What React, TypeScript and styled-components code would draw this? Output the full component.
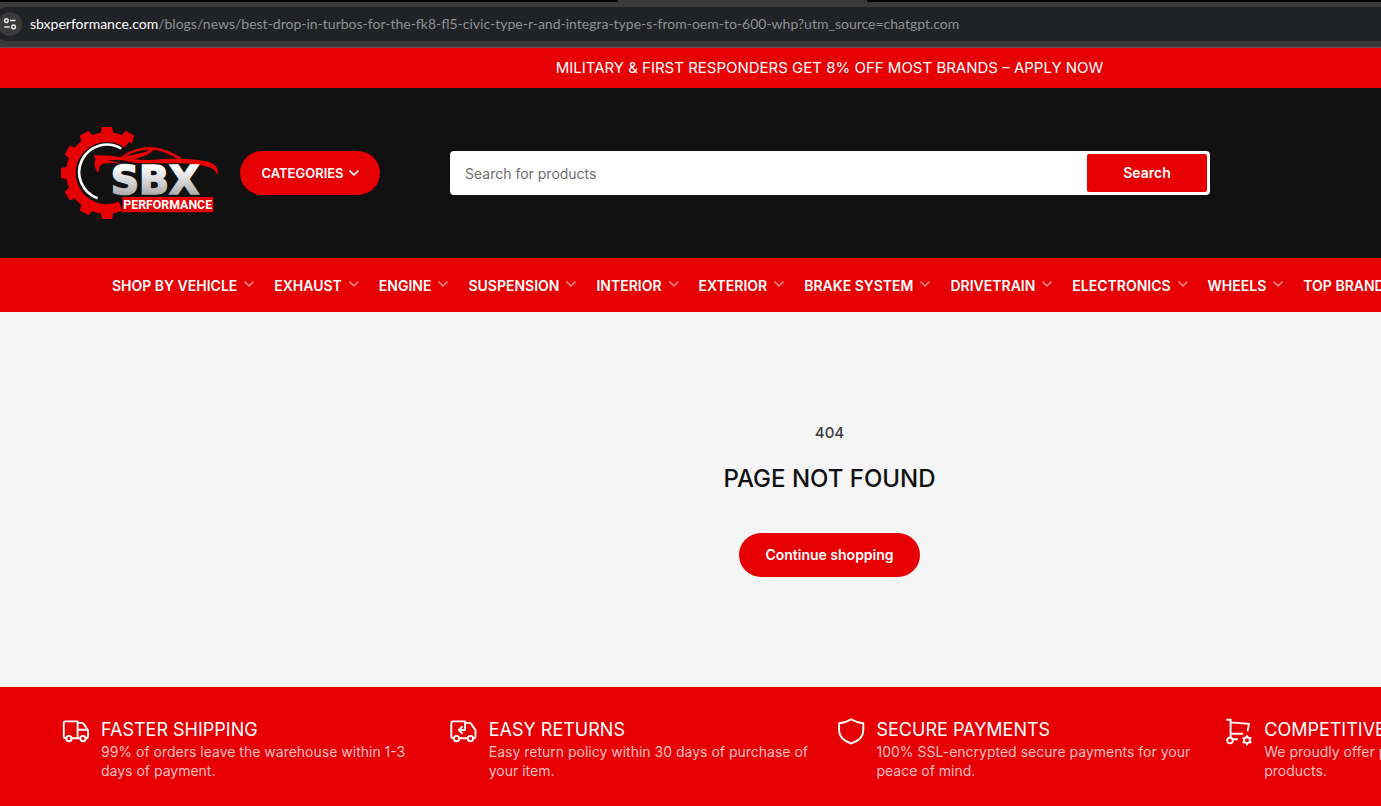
import React from "react";
import styled, { createGlobalStyle } from "styled-components";

const RED = "#e60004";

const GlobalStyle = createGlobalStyle`
  *, *::before, *::after { box-sizing: border-box; }
  body {
    margin: 0;
    background: #f5f5f5;
    font-family: "Inter", "Liberation Sans", sans-serif;
    -webkit-font-smoothing: antialiased;
  }
  h1, h2, p, ul { margin: 0; padding: 0; }
  button, input { font-family: inherit; }
`;

const Window = styled.div`
  min-height: 100vh;
  overflow: hidden;
  display: flex;
  flex-direction: column;
`;

const TabStrip = styled.div`
  height: 2px;
  padding-left: 618px;
  background: #000;
`;

const ActiveTab = styled.div`
  width: 249px;
  height: 2px;
  background: #3a3a3b;
`;

const BrowserBar = styled.div`
  height: 46px;
  padding: 5px 0 6px;
  background: #3a3a3b;
  border-bottom: 1px solid #6b5050;
`;

const AddressBox = styled.div`
  display: flex;
  align-items: center;
  gap: 8px;
  height: 34px;
  margin-left: -8px;
  padding-left: 6px;
  border-radius: 17px 0 0 17px;
  background: #202225;
`;

const SiteInfo = styled.button`
  display: grid;
  place-items: center;
  flex: none;
  width: 24px;
  height: 24px;
  padding: 0;
  border: 0;
  border-radius: 50%;
  background: #3a3a3b;
`;

const Url = styled.p`
  font-family: Lato, "Open Sans", sans-serif;
  font-size: 14px;
  line-height: 20px;
  white-space: nowrap;
  color: #8f9194;
`;

const Host = styled.span`
  color: #fff;
`;

/* The shop page is wider than the visible window and runs off its right edge. */
const Shop = styled.div`
  display: flex;
  flex-direction: column;
  flex: 1;
  width: calc(100% + 278px);
`;

const Announcement = styled.a`
  display: block;
  background: ${RED};
  color: #fff;
  font-size: 15px;
  line-height: 40px;
  text-align: center;
  text-decoration: none;
`;

const Header = styled.header`
  display: flex;
  align-items: center;
  height: 170px;
  padding: 0 60px;
  background: #111;
`;

const LogoLink = styled.a`
  display: block;
  width: 160px;
  height: 95px;
  margin-right: 20px;
  svg { display: block; }
`;

const Pill = styled.button<{ $width: number; $size: number }>`
  display: inline-flex;
  align-items: center;
  justify-content: center;
  gap: 5px;
  flex: none;
  width: ${(p) => p.$width}px;
  height: 44px;
  padding: 0 0 1px;
  border: 0;
  border-radius: 22px;
  background: ${RED};
  color: #fff;
  font-size: ${(p) => p.$size}px;
  font-weight: 600;
`;

const SearchForm = styled.form`
  display: flex;
  flex: 1;
  max-width: 760px;
  height: 44px;
  margin-left: 70px;
  padding: 3px;
  border-radius: 4px;
  background: #fff;
`;

const SearchInput = styled.input`
  flex: 1;
  min-width: 0;
  padding: 0 12px;
  border: 0;
  outline: 0;
  background: transparent;
  font-size: 14px;
  color: #111;
  &::placeholder { color: #6e6e6e; opacity: 1; }
`;

const SearchButton = styled.button`
  width: 120px;
  padding: 0 0 2px;
  border: 0;
  border-radius: 2px;
  background: ${RED};
  color: #fff;
  font-size: 14px;
  font-weight: 600;
`;

const Nav = styled.nav`
  height: 54px;
  padding: 2px 0 0 112px;
  background: ${RED};
`;

const NavList = styled.ul`
  display: flex;
  align-items: center;
  gap: 20px;
  height: 100%;
  list-style: none;
`;

const NavLink = styled.a`
  display: flex;
  align-items: center;
  gap: 7px;
  color: #fff;
  font-size: 14px;
  font-weight: 600;
  line-height: 20px;
  white-space: nowrap;
  text-decoration: none;
  svg { opacity: 0.5; margin-bottom: 4px; }
`;

const Main = styled.main`
  display: flex;
  flex-direction: column;
  align-items: center;
  flex: 1;
  padding: 110px 0;
  background: #f5f5f5;
  text-align: center;
`;

const ErrorCode = styled.p`
  margin-bottom: 20px;
  font-size: 15px;
  font-weight: 500;
  line-height: 22px;
  color: #3d3d3d;
`;

const Title = styled.h1`
  margin-bottom: 39px;
  font-size: 24px;
  font-weight: 500;
  line-height: 30px;
  color: #111;
`;

const Footer = styled.footer`
  display: grid;
  grid-template-columns: repeat(4, 1fr);
  column-gap: 12px;
  padding: 31px 60px 26px;
  background: ${RED};
`;

const Feature = styled.section`
  display: flex;
  gap: 11px;
  padding-right: 12px;
  color: #fff;
  svg { flex: none; }
`;

const FeatureTitle = styled.h2`
  margin-bottom: 1px;
  font-size: 18px;
  font-weight: 400;
  line-height: 23px;
`;

const FeatureText = styled.p`
  font-size: 14px;
  line-height: 19px;
  color: #fabfc0;
`;

const Chevron = () => (
  <svg width="10" height="10" viewBox="0 0 10 10" fill="none" stroke="#fff" strokeWidth="1.6" aria-hidden="true">
    <path d="M0.5 2.6 5 6.9 9.5 2.6" />
  </svg>
);

const TuneIcon = () => (
  <svg width="14" height="14" viewBox="0 0 14 14" fill="none" stroke="#e6e6e6" strokeWidth="1.5" aria-hidden="true">
    <circle cx="3.4" cy="3.6" r="1.8" />
    <path d="M7 3.6h5.5M1.2 9.9h5.5" />
    <circle cx="10.6" cy="9.9" r="1.8" />
  </svg>
);

const teeth = [30, 0, -30, -60, -90, -120, -150, -180];

const Logo = () => (
  <svg width="160" height="95" viewBox="30 33 480 285" role="img" aria-label="SBX Performance">
    <defs>
      <linearGradient id="steel" x1="0" y1="0" x2="0" y2="1">
        <stop offset="0.2" stopColor="#fff" />
        <stop offset="0.55" stopColor="#d2d2d2" />
        <stop offset="0.85" stopColor="#a6a6a6" />
      </linearGradient>
    </defs>
    <g fill={RED}>
      {teeth.map((a) => (
        <path key={a} d="M151 60 156 36h30l5 24z" transform={`rotate(${a} 171 174)`} />
      ))}
    </g>
    <path d="M233 86A108 108 0 1 0 212 274" fill="none" stroke={RED} strokeWidth="29" />
    <path
      fill="#111"
      d="M124 118C165 113 205 114 220 113 250 97 275 89 302 90 340 92 370 106 398 124 440 125 480 132 498 145L500 240H150V170z"
    />
    <path d="M214 101A83 83 0 1 0 143 250" fill="none" stroke="#fff" strokeWidth="8" />
    <g fill={RED}>
      <path d="M130 121C165 121 195 124 212 126 240 106 270 96 302 96 340 98 372 114 396 130L382 131C355 115 330 105 302 104 272 104 245 112 226 126 245 133 270 136 300 135 350 131 400 130 440 134 470 137 488 143 497 153 505 163 505 172 502 180 497 168 490 160 474 156 425 140 340 146 285 145 255 145 235 139 213 135L172 135C185 138 205 142 222 148 190 143 160 142 150 152L144 174C133 160 131 143 137 133z" />
      <path d="M226 126C254 114 276 118 298 104L310 105C294 124 268 126 250 134z" />
    </g>
    <text
      x="315"
      y="238"
      textAnchor="middle"
      fontFamily="DejaVu Sans, sans-serif"
      fontWeight="700"
      fontSize="118"
      fill="url(#steel)"
      stroke="url(#steel)"
      strokeWidth="5"
    >
      SBX
    </text>
    <path fill={RED} d="M217 246h273v46H217z" />
    <text
      x="353"
      y="283"
      textAnchor="middle"
      fontFamily="Roboto, sans-serif"
      fontWeight="700"
      fontSize="37"
      fill="#fff"
    >
      PERFORMANCE
    </text>
  </svg>
);

const iconProps = {
  width: 30,
  height: 30,
  viewBox: "0 0 30 30",
  fill: "none",
  stroke: "#fff",
  strokeWidth: 1.9,
  strokeLinejoin: "round" as const,
  strokeLinecap: "round" as const,
  "aria-hidden": true,
};

const TruckIcon = () => (
  <svg {...iconProps}>
    <path d="M6.2 20.2H5.3a1.5 1.5 0 0 1-1.5-1.5V4.9a1.5 1.5 0 0 1 1.5-1.5H17.6v16.8h-7M17.6 4.9h4.4a2 2 0 0 1 1.7 1L28 12.2v6.5a1.5 1.5 0 0 1-1.5 1.5h-1M17.6 11.8h10M17.6 20.2h2.6" />
    <circle cx="9" cy="20.6" r="2.7" />
    <circle cx="23" cy="20.6" r="2.7" />
  </svg>
);

const ReturnIcon = () => (
  <svg {...iconProps}>
    <path d="M5.7 20.2H4.8a1.5 1.5 0 0 1-1.5-1.5V4.9a1.5 1.5 0 0 1 1.5-1.5H17.1v7a1.6 1.6 0 0 1-1.6 1.6h-4M14.1 8.8 10.8 12l3.3 3.2M17.1 4.9h4.4a2 2 0 0 1 1.7 1L27.5 12.2v6.5a1.5 1.5 0 0 1-1.5 1.5h-1M11.2 20.2h8.6" />
    <circle cx="8.5" cy="20.6" r="2.7" />
    <circle cx="22.5" cy="20.6" r="2.7" />
  </svg>
);

const ShieldIcon = () => (
  <svg {...iconProps}>
    <path d="M15.2 1.2C11.7 3.5 7.7 4.8 3.1 5.2v7.4c0 6.3 4.6 10.4 12.1 12.9 7.5-2.5 12.1-6.6 12.1-12.9V5.2C22.7 4.8 18.7 3.5 15.2 1.2z" />
  </svg>
);

const CartGearIcon = () => (
  <svg {...iconProps} strokeLinecap="butt" strokeLinejoin="miter">
    <path d="M3.2 1.8h4.4v17.6M7.6 4.4 25.9 5.8 24.6 13.4M7.6 15.8h12.6M9.6 21.2h5.4" />
    <circle cx="7" cy="22.6" r="2.8" />
    <circle cx="24" cy="22.2" r="2.9" />
    <path d="M24 17.2v2.4M24 24.8v2.4M19.6 19.7l2.1 1.2M26.3 23.5l2.1 1.2M19.6 24.7l2.1-1.2M26.3 20.9l2.1-1.2" />
  </svg>
);

const navItems = [
  "SHOP BY VEHICLE",
  "EXHAUST",
  "ENGINE",
  "SUSPENSION",
  "INTERIOR",
  "EXTERIOR",
  "BRAKE SYSTEM",
  "DRIVETRAIN",
  "ELECTRONICS",
  "WHEELS",
  "TOP BRANDS",
];

const features = [
  { icon: <TruckIcon />, title: "FASTER SHIPPING", text: "99% of orders leave the warehouse within 1-3 days of payment." },
  { icon: <ReturnIcon />, title: "EASY RETURNS", text: "Easy return policy within 30 days of purchase of your item." },
  { icon: <ShieldIcon />, title: "SECURE PAYMENTS", text: "100% SSL-encrypted secure payments for your peace of mind." },
  { icon: <CartGearIcon />, title: "COMPETITIVE PRICES", text: "We proudly offer price matching on all of our products." },
];

export default function App() {
  return (
    <Window>
      <GlobalStyle />
      <TabStrip>
        <ActiveTab />
      </TabStrip>
      <BrowserBar>
        <AddressBox>
          <SiteInfo type="button" aria-label="View site information">
            <TuneIcon />
          </SiteInfo>
          <Url>
            <Host>sbxperformance.com</Host>
            /blogs/news/best-drop-in-turbos-for-the-fk8-fl5-civic-type-r-and-integra-type-s-from-oem-to-600-whp?utm_source=chatgpt.com
          </Url>
        </AddressBox>
      </BrowserBar>
      <Shop>
        <Announcement href="#apply">MILITARY &amp; FIRST RESPONDERS GET 8% OFF MOST BRANDS – APPLY NOW</Announcement>
        <Header>
          <LogoLink href="#home">
            <Logo />
          </LogoLink>
          <Pill type="button" $width={140} $size={13}>
            CATEGORIES
            <Chevron />
          </Pill>
          <SearchForm role="search" onSubmit={(e) => e.preventDefault()}>
            <SearchInput type="text" aria-label="Search for products" placeholder="Search for products" />
            <SearchButton type="submit">Search</SearchButton>
          </SearchForm>
        </Header>
        <Nav aria-label="Main">
          <NavList>
            {navItems.map((item) => (
              <li key={item}>
                <NavLink href="#shop">
                  {item}
                  <Chevron />
                </NavLink>
              </li>
            ))}
          </NavList>
        </Nav>
        <Main>
          <ErrorCode>404</ErrorCode>
          <Title>PAGE NOT FOUND</Title>
          <Pill type="button" $width={181} $size={14}>
            Continue shopping
          </Pill>
        </Main>
        <Footer>
          {features.map((f) => (
            <Feature key={f.title}>
              {f.icon}
              <div>
                <FeatureTitle>{f.title}</FeatureTitle>
                <FeatureText>{f.text}</FeatureText>
              </div>
            </Feature>
          ))}
        </Footer>
      </Shop>
    </Window>
  );
}
